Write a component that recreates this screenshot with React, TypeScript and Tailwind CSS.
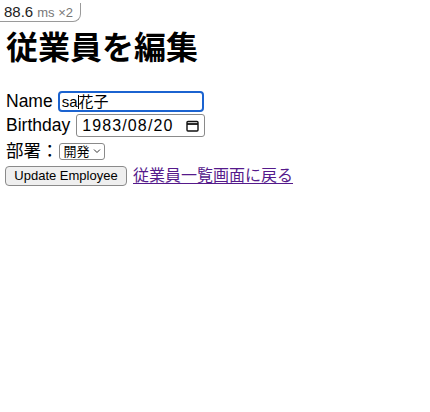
import React from 'react';

const CalendarIcon = () => (
  <svg width="13" height="12" viewBox="0 0 13 12" fill="none">
    <rect x="1" y="1.5" width="11" height="9.5" rx="1" stroke="#111" strokeWidth="1.4" />
    <line x1="1" y1="4" x2="12" y2="4" stroke="#111" strokeWidth="1.8" />
  </svg>
);

const App: React.FC = () => {
  return (
    <div className="min-h-[412px] bg-white text-black font-['Liberation_Sans','Noto_Sans_CJK_JP',sans-serif]">
      <div className="inline-flex items-baseline h-[19px] pl-[4px] pr-[7px] border-r border-b border-[#9a9a9a] rounded-br-[8px] text-[15px] leading-[18px] text-[#222]">
        88.6
        <span className="ml-[4px] text-[13px] text-[#777]">ms ×2</span>
      </div>

      <div className="px-[6px]">
        <h1 className="mt-[5px] mb-[24px] text-[32px] leading-[38px] font-bold">従業員を編集</h1>

        <form className="text-[17.5px]">
          <div className="flex items-center h-[21px]">
            <span>Name</span>
            <div className="ml-[5px] flex items-center w-[146px] h-[21px] px-[2px] border-2 border-[#1b63d0] rounded-[4px] text-[15px] leading-none">
              <span>sa</span>
              <span className="w-px h-[14px] bg-black" />
              <span>花子</span>
            </div>
          </div>

          <div className="flex items-center h-[23px] mt-[2px]">
            <span>Birthday</span>
            <div className="ml-[6px] flex items-center justify-between w-[129px] h-[23px] pl-[5px] pr-[5px] border border-[#8a8a8a] rounded-[3px] text-[16px] tracking-[0.07em] leading-none">
              <span>1983/08/20</span>
              <CalendarIcon />
            </div>
          </div>

          <div className="flex items-center h-[22px] mt-[3px]">
            <span>部署：</span>
            <div className="flex items-center gap-[3px] h-[17px] pl-[4px] pr-[3px] border border-[#8a8a8a] rounded-[3px] text-[13px] leading-none">
              <span>開発</span>
              <svg width="8" height="6" viewBox="0 0 8 6" fill="none">
                <path d="M1 1.5 L4 4.5 L7 1.5" stroke="#333" strokeWidth="1" />
              </svg>
            </div>
          </div>

          <div className="flex items-center h-[21px] mt-[3px]">
            <button
              type="button"
              className="h-[20px] w-[122px] -ml-[1px] border border-[#8a8a8a] rounded-[4px] bg-[#efefef] text-[13px] leading-none text-black"
            >
              Update Employee
            </button>
            <a href="#" className="ml-[6px] text-[16px] text-[#551a8b] underline underline-offset-2">
              従業員一覧画面に戻る
            </a>
          </div>
        </form>
      </div>
    </div>
  );
};

export default App;
